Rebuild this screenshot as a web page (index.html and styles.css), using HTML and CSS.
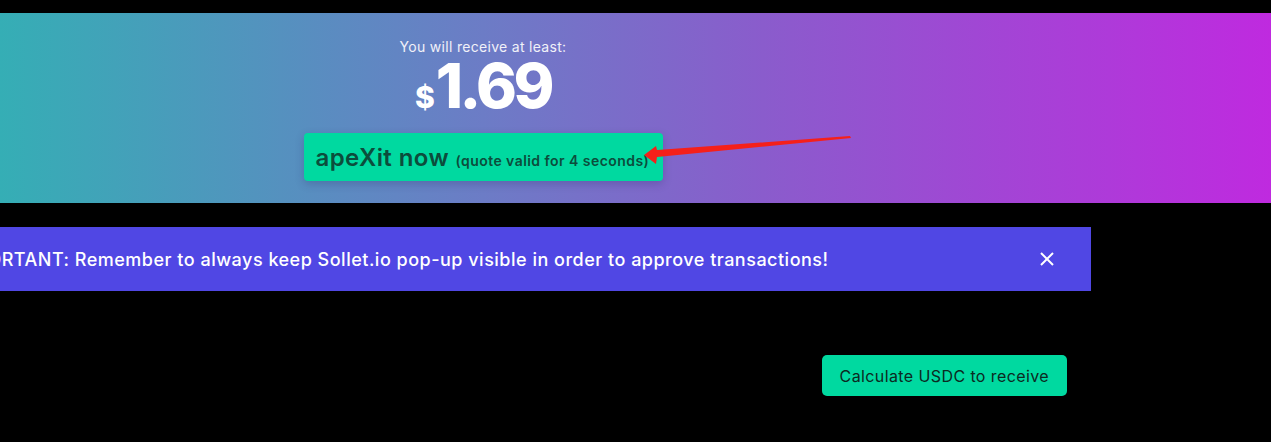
FILE: index.html
```html
<!DOCTYPE html>
<html lang="en">
<head>
  <meta charset="UTF-8" />
  <meta name="viewport" content="width=device-width, initial-scale=1.0" />
  <title>apeXit</title>
  <link rel="stylesheet" href="styles.css">
</head>
<body>
  <section class="cotizacion">
    <div class="contenedor">
      <p class="etiqueta">You will receive at least:</p>
      <p class="monto"><span class="signo">$</span>1.69</p>
      <button class="btn-salir">apeXit now <small>(quote valid for 4 seconds)</small></button>
    </div>
  </section>

  <div class="contenedor">
    <div class="aviso">
      <span>IMPORTANT: Remember to always keep Sollet.io pop-up visible in order to approve transactions!</span>
      <button class="cerrar" aria-label="Cerrar">
        <svg width="14" height="14" viewBox="0 0 14 14"><path d="M1 1 L13 13 M13 1 L1 13" stroke="#fff" stroke-width="2" fill="none"/></svg>
      </button>
    </div>

    <div class="acciones">
      <button class="btn-calcular">Calculate USDC to receive</button>
    </div>
  </div>

  <!-- flecha de anotacion -->
  <svg class="flecha" width="1271" height="442" viewBox="0 0 1271 442">
    <path d="M850 136 L657 150 L656 146 L644 155 L656 164 L657 157 L851 138 Z" fill="#f5201a"/>
  </svg>
</body>
</html>
```

FILE: styles.css
```css
body {
  font-family: Inter, "Open Sans", Arial, sans-serif;
  background-color: #000;
  margin: 0;
  padding: 0;
  overflow: hidden;
}

.cotizacion {
  margin-top: 13px;
  height: 190px;
  background: linear-gradient(90deg, #35aeb5 0%, #6c7cc6 38%, #8a5ccc 60%, #bf2adf 100%);
}

.contenedor {
  width: 1216px;
  margin-left: -125px;
}

.cotizacion .contenedor {
  display: flex;
  flex-direction: column;
  align-items: center;
  padding-top: 25px;
}

.etiqueta {
  margin: 0;
  color: #f1f1f8;
  font-size: 14px;
  line-height: 18px;
  letter-spacing: 0.3px;
}

.monto {
  margin: 0;
  color: #fff;
  font-size: 62px;
  font-weight: 800;
  line-height: 60px;
  letter-spacing: -3.5px;
}

.signo {
  font-size: 30px;
  letter-spacing: 0;
  margin-right: 1px;
}

.btn-salir {
  margin-top: 6px;
  height: 48px;
  width: 359px;
  background-color: #00d9a0;
  border: none;
  border-radius: 4px;
  box-shadow: 0 3px 8px rgba(40, 40, 90, 0.25);
  color: #0c4d3c;
  font-family: inherit;
  font-size: 24px;
  font-weight: 600;
  letter-spacing: 0.4px;
  padding: 0 12px;
  text-align: left;
  white-space: nowrap;
}

.btn-salir small {
  font-size: 14px;
  font-weight: 600;
  letter-spacing: 0.45px;
}

.aviso {
  margin-top: 24px;
  height: 64px;
  background-color: #5047e4;
  color: #fff;
  display: flex;
  align-items: center;
  justify-content: space-between;
  padding: 0 37px 0 78px;
  font-size: 18px;
  font-weight: 500;
  letter-spacing: 0.5px;
  white-space: nowrap;
}

.cerrar {
  background: none;
  border: none;
  padding: 0;
  display: flex;
  cursor: pointer;
}

.acciones {
  display: flex;
  justify-content: flex-end;
  padding: 64px 24px 0 0;
}

.btn-calcular {
  background-color: #00d9a0;
  border: none;
  border-radius: 5px;
  color: #0c2a22;
  font-family: inherit;
  font-size: 16px;
  letter-spacing: 0.4px;
  height: 41px;
  padding: 0 18px;
  cursor: pointer;
}

.flecha {
  position: absolute;
  top: 0;
  left: 0;
  pointer-events: none;
}
```
